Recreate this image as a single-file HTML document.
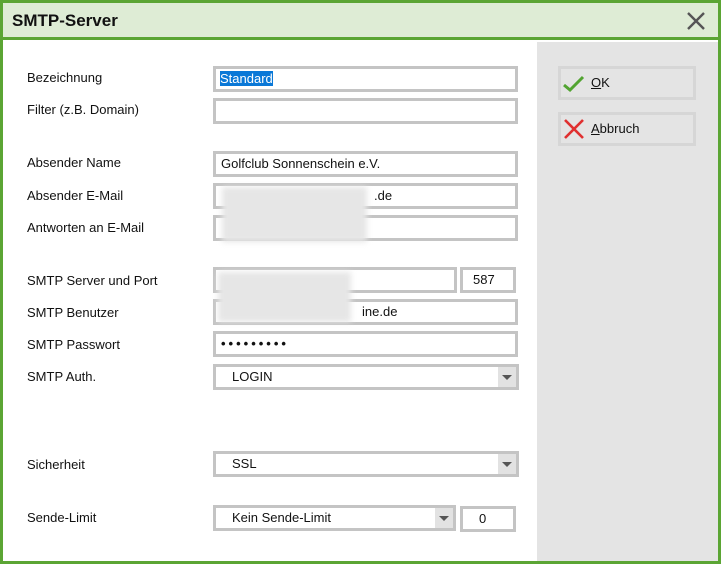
<!DOCTYPE html><html><head><style>
*{box-sizing:border-box;margin:0;padding:0}
body{width:721px;height:564px;overflow:hidden;background:#fff;font-family:"Liberation Sans",sans-serif;font-size:13px;color:#111;position:relative}
.frame{position:absolute;left:0;top:0;width:721px;height:564px;border:3px solid #5ba534}
.title{position:absolute;left:3px;top:3px;width:715px;height:37px;background:#deecd5;border-bottom:3px solid #5ba534}
.title b{position:absolute;left:9px;top:8px;font-size:17px}
.side{position:absolute;left:537px;top:42px;width:181px;height:519px;background:#e4e4e4}
.lbl{position:absolute;left:27px;font-size:13px}
.in{position:absolute;border:3px solid #c4c4c4;background:#fff;height:26px;padding-left:5px;line-height:20px;font-size:13px}
.dd{position:absolute;border:3px solid #c4c4c4;background:#fff;height:26px;padding-left:16px;line-height:20px}
.arr{position:absolute;right:0;top:0;width:18px;height:20px;background:#e2e2e2}
.arr:after{content:"";position:absolute;left:4px;top:8px;border-left:5px solid transparent;border-right:5px solid transparent;border-top:5px solid #555}
.btn{position:absolute;left:558px;width:138px;height:34px;border:3px solid #d6d6d6;background:#e4e4e4;font-size:13px}
.btn span{position:absolute;left:30px;top:6px}
.blur{position:absolute;background:#e6e6e6;filter:blur(3px)}
</style></head><body>
<div class="frame"></div>
<div class="title"><b>SMTP-Server</b>
<svg style="position:absolute;right:12px;top:8px" width="20" height="20"><path d="M2 2L18 18M18 2L2 18" stroke="#555" stroke-width="2.4"/></svg></div>
<div class="side"></div>
<div class="btn" style="top:66px"><svg style="position:absolute;left:1px;top:5px" width="24" height="20"><path d="M2 11L8 16L21 3" stroke="#52a431" stroke-width="3" fill="none"/></svg><span><u>O</u>K</span></div>
<div class="btn" style="top:112px"><svg style="position:absolute;left:2px;top:3px" width="22" height="22"><path d="M2 2L20 20M20 2L2 20" stroke="#e03030" stroke-width="2.6"/></svg><span><u>A</u>bbruch</span></div>

<div class="lbl" style="top:70px">Bezeichnung</div>
<div class="lbl" style="top:102px">Filter (z.B. Domain)</div>
<div class="lbl" style="top:155px">Absender Name</div>
<div class="lbl" style="top:188px">Absender E-Mail</div>
<div class="lbl" style="top:220px">Antworten an E-Mail</div>
<div class="lbl" style="top:273px">SMTP Server und Port</div>
<div class="lbl" style="top:305px">SMTP Benutzer</div>
<div class="lbl" style="top:337px">SMTP Passwort</div>
<div class="lbl" style="top:369px">SMTP Auth.</div>
<div class="lbl" style="top:457px">Sicherheit</div>
<div class="lbl" style="top:510px">Sende-Limit</div>

<div class="in" style="left:213px;top:66px;width:305px;padding-left:4px"><span style="background:#0a78d7;color:#fff">Standard</span></div>
<div class="in" style="left:213px;top:98px;width:305px"></div>
<div class="in" style="left:213px;top:151px;width:305px">Golfclub Sonnenschein e.V.</div>
<div class="in" style="left:213px;top:183px;width:305px;padding-left:158px">.de</div>
<div class="in" style="left:213px;top:215px;width:305px"></div>
<div class="in" style="left:213px;top:267px;width:244px"></div>
<div class="in" style="left:460px;top:267px;width:56px;padding-left:10px">587</div>
<div class="in" style="left:213px;top:299px;width:305px;padding-left:146px">ine.de</div>
<div class="in" style="left:213px;top:331px;width:305px;letter-spacing:3px;font-weight:bold">•••••••••</div>
<div class="dd" style="left:213px;top:364px;width:306px">LOGIN<div class="arr"></div></div>
<div class="dd" style="left:213px;top:451px;width:306px">SSL<div class="arr"></div></div>
<div class="dd" style="left:213px;top:505px;width:243px">Kein Sende-Limit<div class="arr"></div></div>
<div class="in" style="left:460px;top:506px;width:56px;padding-left:16px">0</div>
<div class="blur" style="left:222px;top:187px;width:145px;height:55px"></div>
<div class="blur" style="left:218px;top:272px;width:133px;height:50px"></div>
</body></html>
